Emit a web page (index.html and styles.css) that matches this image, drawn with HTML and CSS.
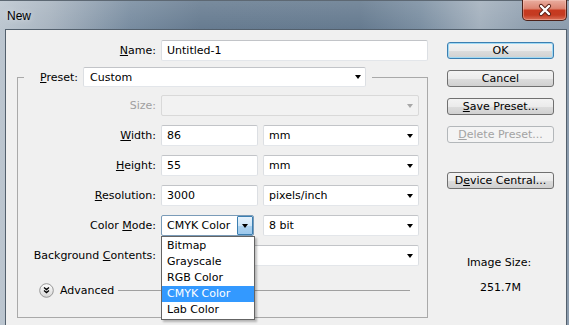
FILE: index.html
```html
<!DOCTYPE html>
<html>
<head>
<meta charset="utf-8">
<link rel="stylesheet" href="styles.css">
</head>
<body>
<div class="window">
  <div class="titlebar">
    <span class="title">New</span>
    <div class="close">
      <svg width="18" height="14" viewBox="0 0 18 14">
        <path d="M5 3 L13 11 M13 3 L5 11" stroke="#5a1f15" stroke-width="4.2" stroke-linecap="round"/>
        <path d="M5 3 L13 11 M13 3 L5 11" stroke="#ffffff" stroke-width="2.4" stroke-linecap="round"/>
      </svg>
    </div>
  </div>
  <div class="client">
    <div class="main">
      <div class="row name-row">
        <span class="lbl"><u>N</u>ame:</span>
        <div class="field name-field">Untitled-1</div>
      </div>
      <fieldset class="group">
        <legend class="legend">
          <span class="lbl-inline"><u>P</u>reset:</span>
          <div class="field select preset"><span class="v">Custom</span><span class="arrow"></span></div>
        </legend>
        <div class="rows">
          <div class="row">
            <span class="lbl off">Size:</span>
            <div class="field select disabled full"><span class="v"></span><span class="arrow"></span></div>
          </div>
          <div class="row">
            <span class="lbl"><u>W</u>idth:</span>
            <div class="field num">86</div>
            <div class="field select unit"><span class="v">mm</span><span class="arrow"></span></div>
          </div>
          <div class="row">
            <span class="lbl"><u>H</u>eight:</span>
            <div class="field num">55</div>
            <div class="field select unit"><span class="v">mm</span><span class="arrow"></span></div>
          </div>
          <div class="row">
            <span class="lbl"><u>R</u>esolution:</span>
            <div class="field num">3000</div>
            <div class="field select unit"><span class="v">pixels/inch</span><span class="arrow"></span></div>
          </div>
          <div class="row">
            <span class="lbl">Color <u>M</u>ode:</span>
            <div class="cm-wrap">
              <div class="field cm-select"><span class="v">CMYK Color</span><span class="drop-btn"><span class="arrow"></span></span></div>
              <ul class="list">
                <li>Bitmap</li>
                <li>Grayscale</li>
                <li>RGB Color</li>
                <li class="sel">CMYK Color</li>
                <li>Lab Color</li>
              </ul>
            </div>
            <div class="field select unit bits"><span class="v">8 bit</span><span class="arrow"></span></div>
          </div>
          <div class="row">
            <span class="lbl">Background <u>C</u>ontents:</span>
            <div class="field select full"><span class="v"></span><span class="arrow"></span></div>
          </div>
        </div>
        <div class="advanced">
          <svg class="adv-icon" width="15" height="15" viewBox="0 0 15 15">
            <defs>
              <linearGradient id="g" x1="0" y1="0" x2="0" y2="1">
                <stop offset="0" stop-color="#ffffff"/>
                <stop offset="1" stop-color="#d6d6d6"/>
              </linearGradient>
            </defs>
            <circle cx="7.5" cy="7.5" r="6.8" fill="url(#g)" stroke="#8c8c8c" stroke-width="0.9"/>
            <path d="M5 4.6 L7.5 6.6 L10 4.6 M5 7.6 L7.5 9.6 L10 7.6" fill="none" stroke="#000" stroke-width="1.3"/>
          </svg>
          <span class="adv-text">Advanced</span>
          <span class="adv-line"></span>
        </div>
      </fieldset>
    </div>
    <div class="side">
      <div class="btn ok">OK</div>
      <div class="btn">Cancel</div>
      <div class="btn"><span><u>S</u>ave Preset...</span></div>
      <div class="btn disabled"><span><u>D</u>elete Preset...</span></div>
      <div class="btn device"><span>D<u>e</u>vice Central...</span></div>
      <div class="info-label">Image Size:</div>
      <div class="info-value">251.7M</div>
    </div>
  </div>
</div>
</body>
</html>
```
FILE: styles.css
```css
* { box-sizing: border-box; }
html, body { margin: 0; padding: 0; }
body {
  width: 569px;
  height: 325px;
  overflow: hidden;
  font-family: "DejaVu Sans", sans-serif;
  font-size: 11px;
  color: #000;
  background: #6f8397;
}
u { text-decoration: underline; text-underline-offset: 1px; }

.window {
  height: 325px;
  display: flex;
  flex-direction: column;
  padding: 0 2px 0 5px;
  border-top: 1px solid #5d6873;
  background:
    linear-gradient(180deg, rgba(255,255,255,0.12) 0px, rgba(255,255,255,0) 29px),
    linear-gradient(90deg, #bcc6d0 0px, #a8b4c0 50px, #788ca0 130px, #667b90 200px, #657a8f 360px, #7a8ea1 420px, #a3b0bd 480px, #8e9eae 530px, #8c9cad 569px);
}

.titlebar {
  height: 28px;
  flex: none;
  display: flex;
  justify-content: space-between;
  align-items: flex-start;
}
.title {
  font-family: "Liberation Sans", sans-serif;
  font-size: 12px;
  line-height: 14px;
  padding: 8px 0 0 2px;
  color: #000;
  text-shadow: 0 0 6px rgba(255,255,255,0.6);
}
.close {
  width: 45px;
  height: 21px;
  margin-right: 0;
  margin-top: -1px;
  border: 1px solid #4d2119;
  border-top: none;
  border-radius: 0 0 5px 5px;
  background: linear-gradient(180deg, #e9ad9f 0%, #dd8572 42%, #c73a20 52%, #c43b21 75%, #da7058 100%);
  box-shadow: inset 0 0 0 1px rgba(255,220,210,0.35);
  display: flex;
  align-items: center;
  justify-content: center;
}

.client {
  flex: 1;
  background: #f0f0f0;
  border: 1px solid #53606d;
  border-bottom: none;
  display: flex;
  gap: 19px;
}

.main {
  width: 422px;
  padding-top: 10px;
  display: flex;
  flex-direction: column;
}

.row {
  display: flex;
  align-items: center;
  gap: 5px;
  height: 21px;
}
.lbl {
  flex: none;
  text-align: right;
  white-space: nowrap;
}
.name-row .lbl { width: 150px; }
.group .lbl { width: 138px; }
.lbl.off { color: #a0a0a0; }

.field {
  height: 21px;
  flex: none;
  background: #fff;
  border: 1px solid;
  border-color: #c2c4c8 #dcdfe3 #e3e6ea #dcdfe3;
  border-radius: 2px;
  padding-left: 5px;
  display: flex;
  align-items: center;
  white-space: nowrap;
}
.name-field { width: 267px; }
.num { width: 97px; }
.select .v { flex: 1; }
.arrow {
  width: 0;
  height: 0;
  border-left: 3.5px solid transparent;
  border-right: 3.5px solid transparent;
  border-top: 4px solid #000;
  margin-right: 5px;
}
.unit { width: 156px; }
.bits { margin-left: 4px; }
.full { width: 258px; }
.select.disabled {
  background: #f2f2f2;
  border-color: #d9d9d9;
}
.select.disabled .arrow { border-top-color: #a8a8a8; }

.group {
  margin: 6px 0 0 11px;
  width: 411px;
  min-width: 0;
  padding: 8px 0 19px 0;
  border: 1px solid #a9a9a9;
  border-radius: 0;
}
.legend {
  margin-left: 6px;
  padding: 0 6px 0 16px;
  height: 20px;
  display: flex;
  align-items: center;
  gap: 5px;
}
.preset {
  width: 283px;
  height: 20px;
  padding-left: 6px;
}
.preset .arrow { margin-right: 4px; }

.rows {
  display: flex;
  flex-direction: column;
  gap: 9px;
}

.cm-wrap {
  position: relative;
  flex: none;
}
.cm-select {
  width: 93px;
  border-color: #7a9bb8;
  padding-right: 0;
}
.cm-select .v { flex: 1; }
.drop-btn {
  width: 16px;
  height: 19px;
  border: 1px solid #3c7fb1;
  border-radius: 1px;
  background: linear-gradient(180deg, #e6f2fc 0%, #cfe6f8 50%, #aed3f0 51%, #9cc8ec 100%);
  display: flex;
  align-items: center;
  justify-content: center;
}
.drop-btn .arrow { margin: 0; }

.list {
  position: absolute;
  left: 0;
  top: 21px;
  width: 94px;
  margin: 0;
  padding: 1px 0 1px 0;
  list-style: none;
  background: #fff;
  border: 1px solid #646464;
  box-shadow: 2px 2px 2px rgba(0,0,0,0.25);
  z-index: 5;
}
.list li {
  height: 16px;
  line-height: 16px;
  padding-left: 5px;
  white-space: nowrap;
}
.list li.sel {
  background: #3399ff;
  color: #fff;
}

.advanced {
  margin-top: 17px;
  padding-left: 21px;
  height: 15px;
  display: flex;
  align-items: center;
}
.adv-icon { flex: none; }
.adv-text { margin-left: 6px; }
.adv-line {
  flex: 1;
  height: 1px;
  background: #a0a0a0;
  margin: 0 17px 0 4px;
}

.side {
  width: 107px;
  padding-top: 12px;
  display: flex;
  flex-direction: column;
  gap: 11px;
}
.btn {
  height: 17px;
  border: 1px solid #707070;
  border-radius: 3px;
  background: linear-gradient(180deg, #f3f3f3 0%, #ebebeb 50%, #dddddd 51%, #d0d0d0 100%);
  display: flex;
  align-items: center;
  justify-content: center;
  line-height: 13px;
  white-space: nowrap;
}
.btn.ok {
  border-color: #3c7fb1;
  box-shadow: inset 0 0 0 1px #9fd9f4;
}
.btn.disabled {
  color: #a3a3a3;
  border-color: #b3b7ba;
  background: #f4f4f4;
}
.btn.device { margin-top: 18px; }

.info-label {
  margin-top: 56px;
  text-align: center;
  line-height: 14px;
  padding-right: 3px;
}
.info-value {
  margin-top: 0;
  text-align: center;
  line-height: 14px;
}
```
